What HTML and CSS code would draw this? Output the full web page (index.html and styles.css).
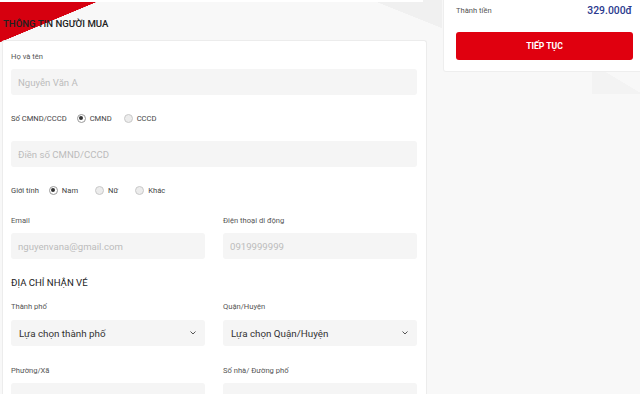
FILE: index.html
```html
<!DOCTYPE html>
<html lang="vi">
<head>
<meta charset="utf-8">
<title>Thông tin người mua</title>
<link rel="stylesheet" href="styles.css">
</head>
<body>
<div class="page">
  <div class="left">
    <div class="topbar"></div>
    <h2 class="section-title">THÔNG TIN NGƯỜI MUA</h2>
    <div class="card">
      <div class="label">Họ và tên</div>
      <input class="field" type="text" placeholder="Nguyễn Văn A">

      <div class="radio-row r-cmnd">
        <span class="radio-label">Số CMND/CCCD</span>
        <span class="opt"><span class="radio checked"></span>CMND</span>
        <span class="opt"><span class="radio"></span>CCCD</span>
      </div>
      <input class="field" type="text" placeholder="Điền số CMND/CCCD">

      <div class="radio-row r-gender">
        <span class="radio-label">Giới tính</span>
        <span class="opt o-wide"><span class="radio checked"></span>Nam</span>
        <span class="opt o-wide"><span class="radio"></span>Nữ</span>
        <span class="opt"><span class="radio"></span>Khác</span>
      </div>

      <div class="grid g-contact">
        <div class="col">
          <div class="label">Email</div>
          <input class="field" type="text" placeholder="nguyenvana@gmail.com">
        </div>
        <div class="col">
          <div class="label">Điện thoại di động</div>
          <input class="field" type="text" placeholder="0919999999">
        </div>
      </div>

      <h3 class="sub-title">ĐỊA CHỈ NHẬN VÉ</h3>

      <div class="grid g-city">
        <div class="col">
          <div class="label">Thành phố</div>
          <div class="select"><span>Lựa chọn thành phố</span>
            <svg width="6" height="4" viewBox="0 0 6 4"><path d="M0.5 0.5 L3 3 L5.5 0.5" fill="none" stroke="#555" stroke-width="1"/></svg>
          </div>
        </div>
        <div class="col">
          <div class="label">Quận/Huyện</div>
          <div class="select"><span>Lựa chọn Quận/Huyện</span>
            <svg width="6" height="4" viewBox="0 0 6 4"><path d="M0.5 0.5 L3 3 L5.5 0.5" fill="none" stroke="#555" stroke-width="1"/></svg>
          </div>
        </div>
      </div>

      <div class="grid g-ward">
        <div class="col">
          <div class="label">Phường/Xã</div>
          <input class="field" type="text">
        </div>
        <div class="col">
          <div class="label">Số nhà/ Đường phố</div>
          <input class="field" type="text">
        </div>
      </div>
    </div>
  </div>

  <div class="right">
    <div class="summary">
      <div class="total-row">
        <span class="total-label">Thành tiền</span>
        <span class="total-value">329.000đ</span>
      </div>
      <button class="btn">TIẾP TỤC</button>
    </div>
  </div>
</div>
</body>
</html>
```

FILE: styles.css
```css
* { box-sizing: border-box; }
html, body {
  margin: 0;
  padding: 0;
}
body {
  width: 640px;
  height: 394px;
  overflow: hidden;
  font-family: Roboto, "Noto Sans", Arial, sans-serif;
  color: #333;
  background-color: #f8f8f8;
  background-image:
    linear-gradient(to bottom right, #d6000f 50%, transparent 50.5%),
    linear-gradient(to bottom left, #f0f0f0 50%, transparent 50.5%),
    linear-gradient(to top right, #f3f3f3 50%, transparent 50.5%);
  background-size: 96px 40px, 70px 28px, 50px 30px;
  background-position: 0 2px, 372px 0, 592px 64px;
  background-repeat: no-repeat;
}
.page {
  display: flex;
  gap: 16px;
  padding-left: 2px;
  height: 394px;
  overflow: hidden;
}
.left {
  width: 425px;
  flex: none;
}
.topbar {
  height: 2px;
  margin-left: -2px;
  width: 423px;
  background: #fff;
}
.section-title {
  margin: 0;
  padding: 16px 0 10px 1px;
  font-size: 9.6px;
  line-height: 12px;
  font-weight: 500;
  color: #222;
}
.card {
  background: #fff;
  border: 1px solid #ececec;
  border-bottom: 0;
  border-radius: 3px 3px 0 0;
  padding: 11px 9px 0 8px;
  height: 354px;
}
.label {
  font-size: 7.6px;
  line-height: 10px;
  color: #555;
  margin-bottom: 7px;
}
.field {
  display: block;
  width: 100%;
  height: 26px;
  border: 0;
  outline: 0;
  border-radius: 3px;
  background: #f5f5f5;
  padding: 0 7px;
  font-family: Roboto, "Noto Sans", Arial, sans-serif;
  font-size: 9.6px;
  color: #333;
}
.field::placeholder { color: #bcbcbc; }
.radio-row {
  display: flex;
  align-items: center;
  height: 10px;
  font-size: 7.6px;
  color: #444;
}
.r-cmnd { margin-top: 18px; margin-bottom: 18px; }
.r-gender { margin-top: 18px; }
.radio-label { margin-right: 10px; }
.opt {
  display: flex;
  align-items: center;
  margin-right: 12px;
}
.o-wide { margin-right: 17px; }
.radio {
  width: 9px;
  height: 9px;
  border-radius: 50%;
  border: 1px solid #c9c9c9;
  background: #ececec;
  margin-right: 4px;
  display: flex;
  align-items: center;
  justify-content: center;
}
.radio.checked {
  background: #fff;
  border-color: #9a9a9a;
}
.radio.checked::after {
  content: "";
  width: 4px;
  height: 4px;
  border-radius: 50%;
  background: #333;
}
.grid {
  display: grid;
  grid-template-columns: 1fr 1fr;
  column-gap: 18px;
}
.g-contact { margin-top: 21px; }
.sub-title {
  margin: 18px 0 13px;
  font-size: 9.6px;
  line-height: 12px;
  font-weight: 400;
  color: #222;
}
.g-city .label { margin-bottom: 8px; }
.select {
  display: flex;
  align-items: center;
  justify-content: space-between;
  height: 26px;
  border-radius: 3px;
  background: #f5f5f5;
  padding: 0 9px 0 8px;
  font-size: 9.8px;
  color: #333;
}
.g-ward { margin-top: 20px; }
.right {
  width: 203px;
  flex: none;
}
.summary {
  background: #fff;
  border: 1px solid #eeeeee;
  border-top: 0;
  border-radius: 0 0 3px 3px;
  padding: 0 12px 11px 12px;
}
.total-row {
  display: flex;
  justify-content: space-between;
  align-items: center;
  height: 20px;
  padding-right: 1px;
}
.total-label {
  font-size: 7.6px;
  color: #555;
}
.total-value {
  font-size: 10.4px;
  font-weight: 500;
  color: #2b3a8e;
}
.btn {
  display: block;
  width: 100%;
  height: 28px;
  margin-top: 12px;
  border: 0;
  border-radius: 3px;
  background: #e0000f;
  color: #fff;
  font-family: Roboto, "Noto Sans", Arial, sans-serif;
  font-size: 8.6px;
  font-weight: 700;
}
```
